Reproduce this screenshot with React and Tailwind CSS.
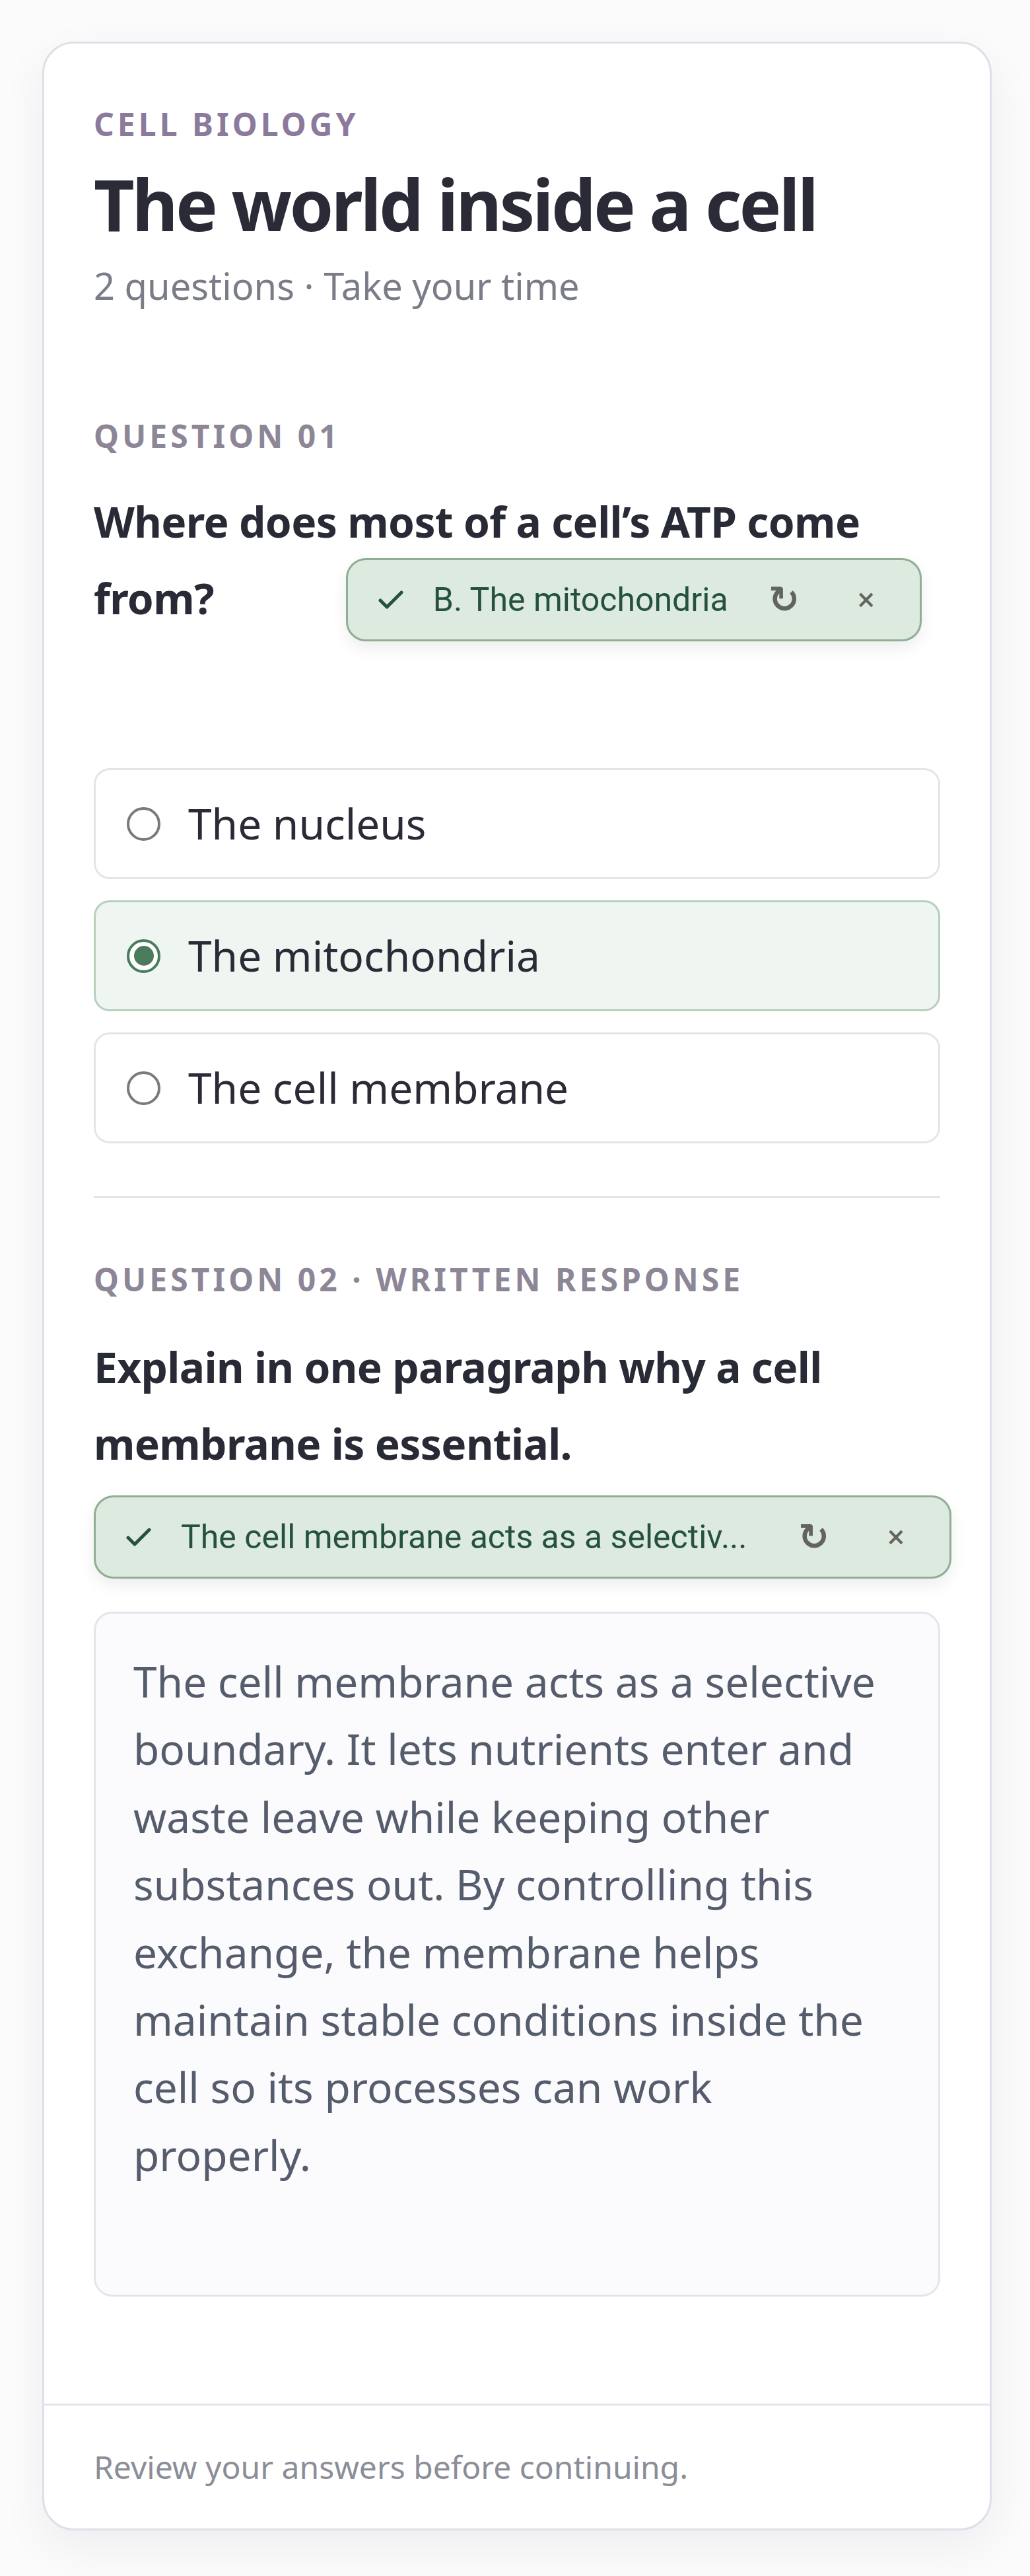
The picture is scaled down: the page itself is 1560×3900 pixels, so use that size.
import React from 'react';

const options = [
  { id: 'a', label: 'The nucleus', selected: false },
  { id: 'b', label: 'The mitochondria', selected: true },
  { id: 'c', label: 'The cell membrane', selected: false },
];

const answer =
  'The cell membrane acts as a selective boundary. It lets nutrients enter and waste leave while keeping other substances out. By controlling this exchange, the membrane helps maintain stable conditions inside the cell so its processes can work properly.';

function Check() {
  return (
    <svg width="40" height="28" viewBox="0 0 40 28" fill="none" className="shrink-0">
      <path d="M4 15 L14 25 L36 3" stroke="#255140" strokeWidth="5" strokeLinecap="round" strokeLinejoin="round" />
    </svg>
  );
}

// pill that shows the chosen answer, with redo / dismiss controls
function AnswerChip({ text, className }) {
  return (
    <span
      className={`h-[126px] items-center rounded-[30px] border-[3px] border-[#8fae94] bg-[#ddeadf] pl-[45px] pr-[69px] font-normal tracking-normal shadow-[0_10px_24px_rgba(0,0,0,0.07)] ${className}`}
    >
      <Check />
      <span className="ml-[44px] shrink-0 whitespace-nowrap font-['Roboto',sans-serif] text-[50px] leading-none text-[#255140]">
        {text}
      </span>
      <span className="flex-1" />
      <span className="flex w-[41px] justify-center font-['DejaVu_Sans',sans-serif] text-[56px] font-bold leading-none text-[#64645e]">
        ↻
      </span>
      <span className="ml-[92px] flex w-[24px] justify-center font-['Roboto',sans-serif] text-[48px] leading-none text-[#64645e]">
        ×
      </span>
    </span>
  );
}

function Radio({ selected }) {
  if (selected) {
    return (
      <span className="flex h-[51px] w-[51px] shrink-0 items-center justify-center rounded-full border-[4px] border-[#4a7c5c] bg-white">
        <span className="h-[30px] w-[30px] rounded-full bg-[#4a7c5c]" />
      </span>
    );
  }
  return <span className="h-[51px] w-[51px] shrink-0 rounded-full border-[4px] border-[#7a7a7a] bg-white" />;
}

function Label({ children, className = '' }) {
  return (
    <div className={`text-[48px] font-bold uppercase leading-[48px] tracking-[0.105em] ${className}`}>{children}</div>
  );
}

export default function App() {
  return (
    <div className="min-h-[3900px] bg-[#fbfbfc] pt-[63px] font-['Noto_Sans',sans-serif]">
      <div className="ml-[64px] w-[1438px] overflow-hidden rounded-[48px] border-[3px] border-[#dde0e8] bg-white shadow-[0_24px_70px_rgba(15,23,42,0.06)]">
        <div className="px-[75px] pb-[162px] pt-[98px]">
          {/* header */}
          <Label className="text-[#8b7a9b]">Cell Biology</Label>
          <h1 className="mt-[32px] text-[107px] font-bold leading-[130px] tracking-[-0.034em] text-[#2a2b36]">
            The world inside a cell
          </h1>
          <p className="mt-[19px] text-[56px] leading-[78px] text-[#7a7d88]">2 questions · Take your time</p>

          {/* question 1 */}
          <Label className="mt-[165px] text-[#8c8696]">Question 01</Label>
          <h2 className="mt-[48px] text-[64px] font-bold leading-[116px] tracking-[-0.01em] text-[#282a35]">
            Where does most of a cell’s ATP come from?
            <AnswerChip
              text="B. The mitochondria"
              className="-mb-[7px] -mt-[3px] ml-[200px] inline-flex w-[872px] align-top"
            />
          </h2>

          <div className="mt-[199px] flex flex-col gap-[32px]">
            {options.map((o) => (
              <div
                key={o.id}
                className={`flex h-[168px] items-center rounded-[24px] border-[3px] pl-[47px] ${
                  o.selected ? 'border-[#b7d0bd] bg-[#eff5f0]' : 'border-[#e4e5eb] bg-white'
                }`}
              >
                <Radio selected={o.selected} />
                <span className="ml-[42px] text-[64px] leading-none text-[#2a2b36]">{o.label}</span>
              </div>
            ))}
          </div>

          <div className="mt-[80px] h-[3px] bg-[#e4e5eb]" />

          {/* question 2 */}
          <Label className="mt-[99px] text-[#8c8696]">Question 02 · Written response</Label>
          <h2 className="mt-[51px] text-[64px] font-bold leading-[116px] tracking-[-0.01em] text-[#282a35]">
            Explain in one paragraph why a cell membrane is essential.
          </h2>
          <AnswerChip text="The cell membrane acts as a selectiv..." className="mt-[20px] flex w-[1299px]" />

          <div className="mt-[50px] h-[1037px] rounded-[28px] border-[3px] border-[#e4e5eb] bg-[#fbfbfe] pl-[57px] pr-[70px] pt-[52px]">
            <p className="text-[64px] leading-[102.4px] text-[#555c6b]">{answer}</p>
          </div>
        </div>

        {/* footer */}
        <div className="border-t-[3px] border-[#e4e5eb] px-[75px] py-[57px]">
          <p className="text-[48px] leading-[72px] text-[#8b8e98]">Review your answers before continuing.</p>
        </div>
      </div>
    </div>
  );
}
